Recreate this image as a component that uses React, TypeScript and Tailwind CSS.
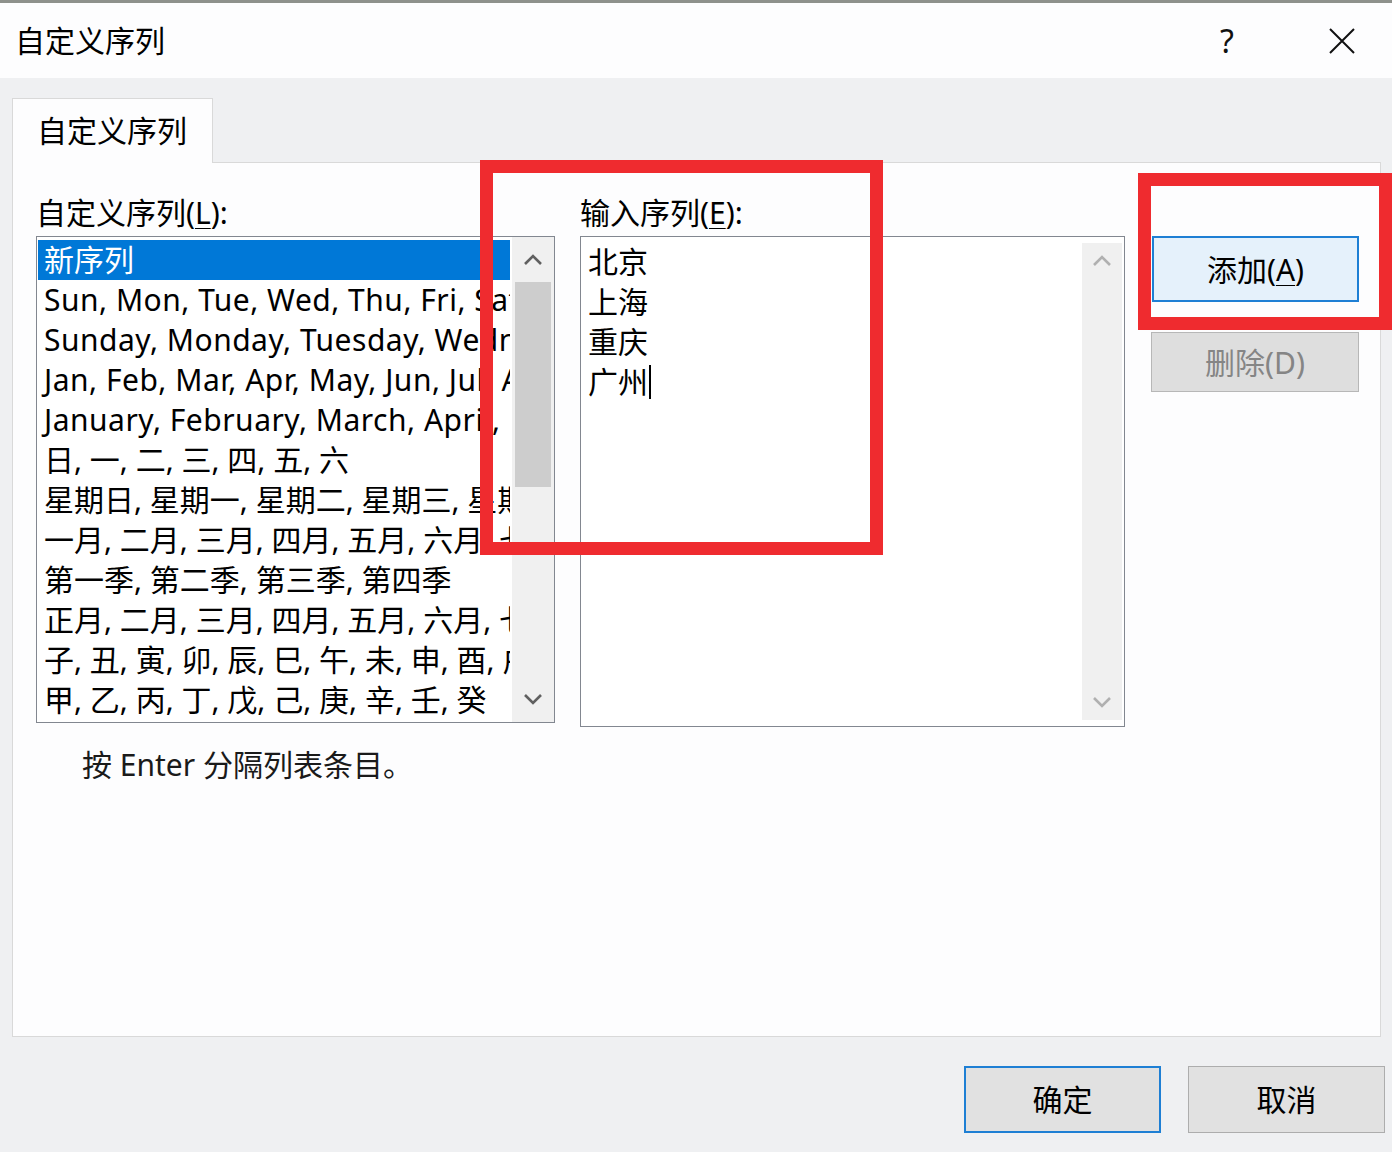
import React from "react";

const listRows = [
  "Sun, Mon, Tue, Wed, Thu, Fri, Sat",
  "Sunday, Monday, Tuesday, Wednesday, Thursday, Friday, Saturday",
  "Jan, Feb, Mar, Apr, May, Jun, Jul, Aug, Sep, Oct, Nov, Dec",
  "January, February, March, April, May, June, July, August, September, October, November, December",
  "日, 一, 二, 三, 四, 五, 六",
  "星期日, 星期一, 星期二, 星期三, 星期四, 星期五, 星期六",
  "一月, 二月, 三月, 四月, 五月, 六月, 七月, 八月, 九月, 十月, 十一月, 十二月",
  "第一季, 第二季, 第三季, 第四季",
  "正月, 二月, 三月, 四月, 五月, 六月, 七月, 八月, 九月, 十月, 冬月, 腊月",
  "子, 丑, 寅, 卯, 辰, 巳, 午, 未, 申, 酉, 戌, 亥",
  "甲, 乙, 丙, 丁, 戊, 己, 庚, 辛, 壬, 癸",
];

function ChevronUp({ color }: { color: string }) {
  return (
    <svg width="20" height="12" viewBox="0 0 20 12">
      <path d="M2 10 L10 2 L18 10" fill="none" stroke={color} strokeWidth="2.6" />
    </svg>
  );
}

function ChevronDown({ color }: { color: string }) {
  return (
    <svg width="20" height="12" viewBox="0 0 20 12">
      <path d="M2 2 L10 10 L18 2" fill="none" stroke={color} strokeWidth="2.6" />
    </svg>
  );
}

export default function App() {
  return (
    <div className="relative w-[1392px] h-[1152px] overflow-hidden bg-[#eff0f2] flex flex-col text-black font-['Noto_Sans','Noto_Sans_CJK_SC',sans-serif]">
      {/* top strip of the sheet behind */}
      <div className="h-[3px] bg-[#8e918c] shrink-0" />

      {/* title bar */}
      <div className="h-[75px] shrink-0 bg-[#fdfdfe] flex items-center pl-[15px]">
        <span className="text-[30px] leading-none">自定义序列</span>
        <span className="ml-auto text-[32px] font-normal leading-none mr-[94px] text-[#111]">?</span>
        <svg width="28" height="28" viewBox="0 0 28 28" className="mr-[36px]">
          <path d="M2 2 L26 26 M26 2 L2 26" stroke="#111" strokeWidth="2" />
        </svg>
      </div>

      {/* body */}
      <div className="flex-1 flex flex-col pl-[12px] pr-[9px] pt-[20px]">
        {/* tab */}
        <div className="relative z-10 -mb-px self-start w-[201px] h-[65px] bg-[#fdfdfe] border border-b-0 border-[#d9d9d9] flex items-center pl-[24px]">
          <span className="text-[30px] leading-none">自定义序列</span>
        </div>

        {/* panel */}
        <div className="mr-[2px] h-[875px] bg-[#fdfdfe] border border-[#d9d9d9] flex pl-[23px] pt-[31px]">
          {/* column 1 */}
          <div className="w-[519px] flex flex-col">
            <div className="h-[38px] leading-[38px] text-[30px] mb-[4px] whitespace-nowrap">
              自定义序列(<span className="underline underline-offset-4 decoration-1">L</span>):
            </div>
            <div className="h-[487px] border border-[#828790] bg-white flex">
              <div className="flex-1 min-w-0 pt-[3px] pl-[1px] pr-[2px] overflow-hidden">
                <div className="h-[40px] bg-[#0078d7] text-white text-[30px] leading-[40px] px-[6px] whitespace-nowrap overflow-hidden">
                  新序列
                </div>
                {listRows.map((r, i) => (
                  <div
                    key={r}
                    className={
                      i < 4
                        ? "h-[40px] text-[30px] tracking-[0.5px] leading-[40px] px-[6px] whitespace-nowrap overflow-hidden"
                        : "h-[40px] text-[30px] leading-[40px] px-[6px] whitespace-nowrap overflow-hidden"
                    }
                  >
                    {r}
                  </div>
                ))}
              </div>
              <div className="w-[42px] shrink-0 bg-[#f0f0f0] flex flex-col items-center">
                <div className="h-[45px] flex items-center justify-center">
                  <ChevronUp color="#606060" />
                </div>
                <div className="w-[36px] h-[205px] bg-[#cdcdcd]" />
                <div className="flex-1" />
                <div className="h-[46px] flex items-center justify-center">
                  <ChevronDown color="#606060" />
                </div>
              </div>
            </div>
            <div className="mt-[23px] pl-[46px] h-[38px] leading-[38px] text-[30px] text-[#1a1a1a] whitespace-nowrap">
              按 Enter 分隔列表条目。
            </div>
          </div>

          {/* column 2 */}
          <div className="ml-[25px] w-[545px] flex flex-col">
            <div className="h-[38px] leading-[38px] text-[30px] mb-[4px] whitespace-nowrap">
              输入序列(<span className="underline underline-offset-4 decoration-1">E</span>):
            </div>
            <div className="h-[491px] border border-[#828790] bg-white flex">
              <div className="flex-1 pt-[5px] pl-[7px]">
                {["北京", "上海", "重庆"].map((c) => (
                  <div key={c} className="h-[40px] leading-[40px] text-[30px]">
                    {c}
                  </div>
                ))}
                <div className="h-[40px] leading-[40px] text-[30px] flex items-center">
                  <span>广州</span>
                  <span className="inline-block w-[2px] h-[34px] bg-black ml-[1px]" />
                </div>
              </div>
              <div className="w-[40px] shrink-0 my-[6px] mr-[2px] bg-[#f0f0f0] flex flex-col items-center justify-between py-[12px]">
                <ChevronUp color="#b0b0b0" />
                <ChevronDown color="#b0b0b0" />
              </div>
            </div>
          </div>

          {/* column 3 */}
          <div className="ml-[26px] w-[208px] flex flex-col">
            <div className="h-[42px]" />
            <button className="h-[66px] w-[207px] ml-[1px] border-2 border-[#1e7fd4] bg-[#e5f1fb] text-[30px] flex items-center justify-center">
              添加(<span className="underline underline-offset-4 decoration-1">A</span>)
            </button>
            <button className="mt-[30px] h-[60px] w-[208px] border border-[#b7b7b7] bg-[#dedede] text-[30px] text-[#858585] flex items-center justify-center">
              删除(D)
            </button>
          </div>
        </div>

        {/* bottom buttons */}
        <div className="mt-[29px] flex justify-end gap-[27px] -mr-[2px]">
          <button className="w-[197px] h-[67px] border-2 border-[#1e7fd4] bg-[#e1e1e1] text-[30px] flex items-center justify-center">
            确定
          </button>
          <button className="w-[197px] h-[67px] border border-[#adadad] bg-[#e1e1e1] text-[30px] flex items-center justify-center">
            取消
          </button>
        </div>
      </div>

      {/* red annotation boxes */}
      <div className="absolute left-[480px] top-[160px] w-[403px] h-[395px] border-[13px] border-[#ef2b2f] pointer-events-none" />
      <div className="absolute left-[1138px] top-[173px] w-[254px] h-[157px] border-[13px] border-[#ef2b2f] pointer-events-none" />
    </div>
  );
}
